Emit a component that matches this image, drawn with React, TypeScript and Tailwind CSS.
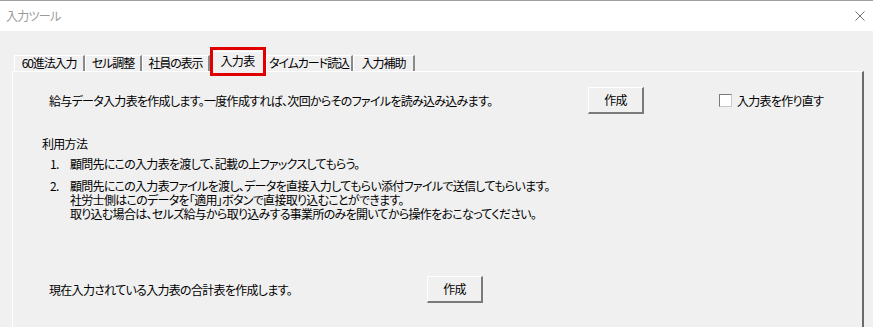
import React from "react";

const F = "font-['Noto_Sans_CJK_JP','Noto_Sans_CJK_SC',sans-serif] [font-feature-settings:'palt']";

function Btn({ label }: { label: string }) {
  return (
    <div className="w-[56px] h-[27px] flex items-center justify-center bg-[#f0f0f0] border-t border-l border-t-white border-l-white border-b-2 border-r-2 border-b-[#7a7a7a] border-r-[#7a7a7a] text-[12px] text-black">
      {label}
    </div>
  );
}

function Tab({ label, w }: { label: string; w: number }) {
  const cls: Record<number, string> = {
    71: "w-[71px]",
    57: "w-[57px]",
    68: "w-[68px]",
    87: "w-[87px]",
    62: "w-[62px]",
  };
  return (
    <div
      className={`${cls[w]} h-[16px] pb-[1px] flex items-center justify-center whitespace-nowrap tracking-[-1.1px] border-t border-l border-t-white border-l-white border-r-2 border-r-[#8a8a8a] text-[12px] leading-none text-black`}
    >
      {label}
    </div>
  );
}

export default function App() {
  return (
    <div className={`w-[873px] h-[327px] overflow-hidden bg-[#f0f0f0] ${F} tracking-[-0.7px] text-black`}>
      <div className="h-px bg-[#a0a0a0]" />
      <div className="h-[30px] bg-white flex items-center justify-between pl-[6px] pr-[7px]">
        <span className="text-[12px] text-[#9a9a9a]">入力ツール</span>
        <svg width="10" height="10" viewBox="0 0 10 10" className="mr-[1px]">
          <path d="M0.5 0.5 L9.5 9.5 M9.5 0.5 L0.5 9.5" stroke="#707070" strokeWidth="1" />
        </svg>
      </div>
      <div className="relative">
        <div className="flex items-end h-[40px] pl-[14px]">
          <Tab label="60進法入力" w={71} />
          <Tab label="セル調整" w={57} />
          <Tab label="社員の表示" w={68} />
          <div className="relative z-10 w-[56px] h-[21px] -mb-px flex items-start justify-center pt-[2px] bg-[#f0f0f0] border-t border-l border-t-white border-l-white border-r-2 border-r-[#8a8a8a] text-[12px] leading-[14px] whitespace-nowrap">
            入力表
          </div>
          <Tab label="タイムカード読込" w={87} />
          <Tab label="入力補助" w={62} />
        </div>
        <div className="absolute left-[210px] top-[16px] w-[56px] h-[29px] border-[3px] border-[#e00000] z-20" />
        <div className="ml-[12px] w-[852px] h-[300px] border-t border-l border-t-white border-l-white border-r-2 border-r-[#6a6a6a] text-[12px]">
          <div className="mt-[15px] h-[27px] flex items-center">
            <div className="w-[575px] pl-[36px] whitespace-nowrap">給与データ入力表を作成します。一度作成すれば、次回からそのファイルを読み込み込みます。</div>
            <Btn label="作成" />
            <div className="ml-[75px] flex items-center">
              <div className="w-[13px] h-[13px] bg-white border border-t-[#7a7a7a] border-l-[#7a7a7a] border-b-[#c8c8c8] border-r-[#c8c8c8]" />
              <span className="ml-[5px] whitespace-nowrap">入力表を作り直す</span>
            </div>
          </div>
          <div className="mt-[23px] pl-[29px] leading-[14px]">利用方法</div>
          <div className="mt-[6px] flex leading-[14px]">
            <span className="w-[57px] pl-[37px]">1.</span>
            <span>顧問先にこの入力表を渡して、記載の上ファックスしてもらう。</span>
          </div>
          <div className="mt-[8px] flex leading-[14px]">
            <span className="w-[57px] pl-[37px]">2.</span>
            <div className="flex flex-col">
              <span className="block h-[14px]">顧問先にこの入力表ファイルを渡し、データを直接入力してもらい添付ファイルで送信してもらいます。</span>
              <span className="block h-[14px]">社労士側はこのデータを「適用」ボタンで直接取り込むことができます。</span>
              <span className="block h-[14px]">取り込む場合は、セルズ給与から取り込みする事業所のみを開いてから操作をおこなってください。</span>
            </div>
          </div>
          <div className="mt-[55px] h-[27px] flex items-center">
            <div className="w-[414px] pl-[36px] whitespace-nowrap">現在入力されている入力表の合計表を作成します。</div>
            <Btn label="作成" />
          </div>
        </div>
      </div>
    </div>
  );
}
